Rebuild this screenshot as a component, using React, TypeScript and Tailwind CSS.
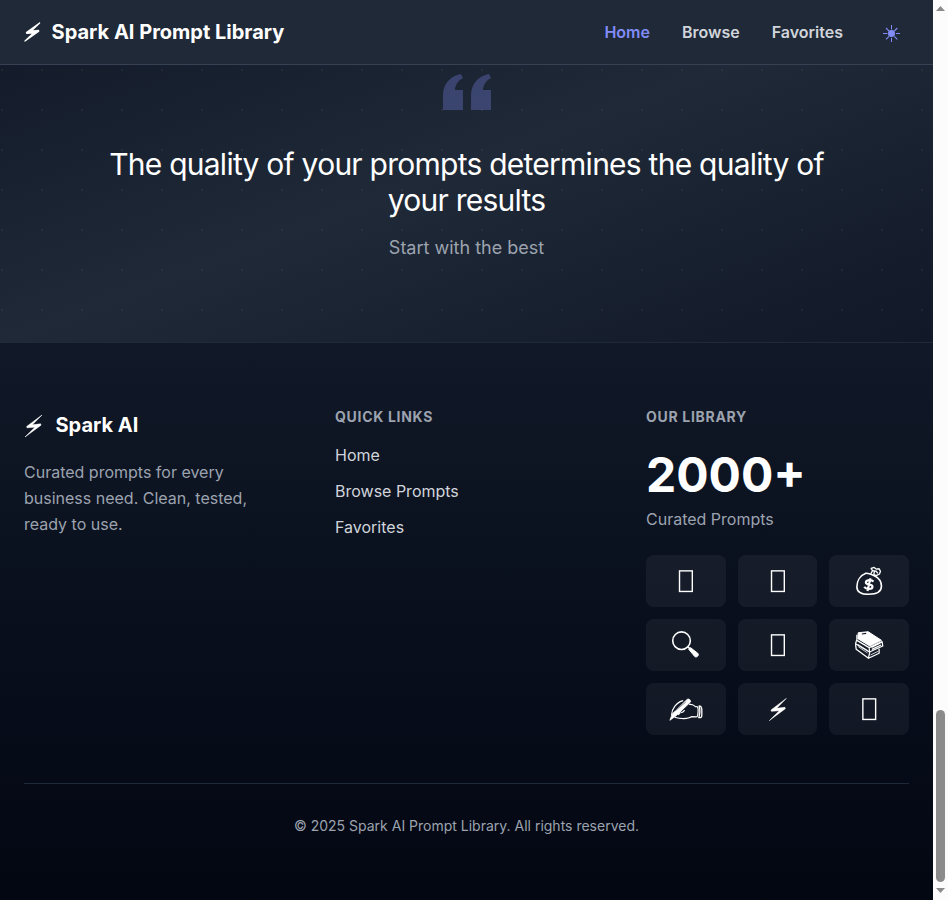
import type { ReactNode } from "react";

const quote =
  "M14.017 21v-7.391c0-5.704 3.731-9.57 8.983-10.609l.995 2.151c-2.432.917-3.995 3.638-3.995 5.849h4v10h-9.983zm-14.017 0v-7.391c0-5.704 3.748-9.57 9-10.609l.996 2.151c-2.433.917-3.996 3.638-3.996 5.849h3.983v10h-9.983z";

const bolt = "M51 0L5 35L6 39L30 37L0 67L48 31L47 27L22 30Z";

function Bolt({ className, stroke = 0 }: { className: string; stroke?: number }) {
  return (
    <svg className={className} viewBox="0 0 51 67" preserveAspectRatio="none" fill="currentColor" stroke="currentColor" strokeWidth={stroke} strokeLinejoin="round">
      <path d={bolt} />
    </svg>
  );
}

function Header() {
  return (
    <header className="relative z-10 flex h-[65px] items-center justify-between border-b border-gray-700 bg-[#1f2937] px-6">
      <a className="flex items-center gap-3 text-xl font-bold text-white">
        <Bolt className="ml-px h-[18px] w-[14.6px] overflow-visible" stroke={4.5} />
        <span>Spark AI Prompt Library</span>
      </a>
      <nav className="flex items-center gap-8 font-semibold text-[#d1d5db]">
        <a className="text-[#818cf8]">Home</a>
        <a>Browse</a>
        <a>Favorites</a>
        <button className="flex w-[34px] justify-center text-[#818cf8]" aria-label="Theme">
          <svg className="mt-[2px] mr-px size-[17px]" viewBox="0 0 51 51" fill="currentColor" stroke="currentColor" strokeWidth="3">
            <circle cx="25.5" cy="25.5" r="9.5" />
            <path d="M25.5 0v13M25.5 39v12M0 25.5h13M39 25.5h12" />
            <path d="M9 9l9 9M34 34l9 9M9 43l9-9M34 18l9-9" strokeWidth="3.2" />
          </svg>
        </button>
      </nav>
    </header>
  );
}

function Quote() {
  return (
    <section className="-mt-[77px] h-[354px] bg-linear-to-br from-[#111827] via-[#1f2937] to-[#111827]">
      <div className="h-full bg-[radial-gradient(circle_at_2px_2px,rgba(255,255,255,0.05)_1px,transparent_0)] bg-size-[40px_40px] pt-20 text-center">
        <svg className="mx-auto mb-[30px] size-12 text-[#818cf8] opacity-30" viewBox="0 0 24 24" fill="currentColor">
          <path d={quote} />
        </svg>
        <h2 className="mx-auto mb-4 max-w-3xl text-3xl leading-9 tracking-tight text-white">
          The quality of your prompts determines the quality of your results
        </h2>
        <p className="text-lg leading-7 text-[#9ca3af]">Start with the best</p>
      </div>
    </section>
  );
}

function Tile({ viewBox, children }: { viewBox: string; children: ReactNode }) {
  return (
    <div className="h-[52px] rounded-lg bg-white/5">
      <svg className="size-full" viewBox={viewBox} fill="none" stroke="#fff" strokeWidth="4.8" strokeLinejoin="round">
        {children}
      </svg>
    </div>
  );
}

function Box({ x = 99 }: { x?: number }) {
  return (
    <Tile viewBox="0 0 240 156">
      <rect x={x + 2} y="47.5" width="38.5" height="62" strokeWidth="4.2" strokeLinejoin="miter" />
    </Tile>
  );
}

function Tiles() {
  return (
    <div className="grid grid-cols-3 gap-3">
      <Box />
      <Box />
      <Tile viewBox="495 -15 240 156">
        <path d="M606 40C588 47 579 64 579 80C579 96 590 103 615 103C641 103 653 95 653 79C653 65 645 54 633 48C624 43 614 39 606 40Z" />
        <path d="M621 41L626 32L622 25L631 22L637 27L646 26L650 34L647 42L637 47L629 43M627 32L637 33L642 40M632 34L630 43" strokeWidth="4" />
        <path d="M629 65C624 58 606 59 606 68C607 77 626 70 626 80C626 89 607 89 601 81M620 55L611 93" strokeWidth="6.5" />
      </Tile>
      <Tile viewBox="-54 177 240 156">
        <circle cx="53" cy="242" r="26.5" />
        <path d="M72 261L79 267" strokeWidth="5" />
        <path d="M75 268L80 263L102 280C107 286 99 294 93 290Z" fill="#fff" strokeWidth="3" />
      </Tile>
      <Box />
      <Tile viewBox="495 177 240 156">
        <path d="M583 218L613 215L653 241L618 258L582 236Z" fill="#fff" strokeWidth="3" />
        <path d="M594 222L607 220" stroke="#171b25" strokeWidth="3.5" />
        <path d="M579 224L579 241L616 263L655 245L657 258L617 276L575 251L578 241M575 253L577 268L614 295L646 280L646 266M618 276L614 294M616 263L617 276M623 262L650 249M624 268L652 255" strokeWidth="3.8" />
        <path d="M582 253L612 272M583 260L611 279M585 231L615 251M620 285L643 274" strokeWidth="2.4" />
      </Tile>
      <Tile viewBox="-54 369 240 156">
        <path d="M18 481L25 462L69 419C74 414 82 420 80 426L37 467Z" fill="#fff" strokeWidth="2.5" />
        <path d="M33 453L66 426" stroke="#171b25" strokeWidth="1.4" />
        <path d="M23 465C24 447 37 427 58 422M76 433C91 431 91 440 98 441M98 440C106 436 103 469 99 471M99 471L83 470C73 478 49 477 32 472M55 447C47 454 48 457 54 457C61 457 58 450 63 452M42 464L49 459" strokeWidth="3.6" />
        <path d="M106 438C114 438 115 443 114 467C114 474 109 473 105 473C109 461 109 448 106 438Z" strokeWidth="4" />
      </Tile>
      <Tile viewBox="221 369 240 156">
        <path d={bolt} transform="translate(315.5 415)" fill="#fff" strokeWidth="1.6" />
      </Tile>
      <Box x={100} />
    </div>
  );
}

function Footer() {
  return (
    <footer className="h-[558px] border-t border-gray-800 bg-linear-to-b from-[#111827] to-[#030712] px-6 pt-16">
      <div className="grid grid-cols-3 gap-12">
        <div>
          <div className="mb-4 flex h-9 items-center text-xl font-bold text-white">
            <Bolt className="mt-px mr-[13.5px] ml-px h-[22px] w-[17px] overflow-visible" stroke={1.6} />
            <span>Spark AI</span>
          </div>
          <p className="max-w-[240px] leading-[26px] text-[#9ca3af]">
            Curated prompts for every business need. Clean, tested, ready to use.
          </p>
        </div>
        <div>
          <h4 className="mb-4 text-sm font-bold tracking-[0.7px] text-[#9ca3af]">QUICK LINKS</h4>
          <ul className="space-y-3 text-[#d1d5db]">
            <li>Home</li>
            <li>Browse Prompts</li>
            <li>Favorites</li>
          </ul>
        </div>
        <div>
          <h4 className="mb-6 text-sm font-bold tracking-[0.7px] text-[#9ca3af]">OUR LIBRARY</h4>
          <div className="mb-2 text-5xl font-bold text-white">2000+</div>
          <div className="mb-6 text-[#9ca3af]">Curated Prompts</div>
          <Tiles />
        </div>
      </div>
      <div className="mt-12 border-t border-gray-800 pt-8 text-center text-sm text-[#9ca3af]">
        © 2025 Spark AI Prompt Library. All rights reserved.
      </div>
    </footer>
  );
}

export default function App() {
  return (
    <div className="flex h-[900px] w-[948px] overflow-hidden font-['Inter',sans-serif]">
      <main className="w-[933px]">
        <Header />
        <Quote />
        <Footer />
      </main>
      <div className="flex w-[15px] flex-col items-center bg-[#fcfcfc]">
        <svg className="mt-[6px] h-[5px] w-[9px]" viewBox="0 0 9 5" fill="#8b8b8b"><path d="M4.5 0L9 5H0z" /></svg>
        <div className="mt-[699px] h-[172px] w-[9px] rounded-full bg-[#8b8b8b]" />
        <svg className="mt-[6px] h-[5px] w-[9px]" viewBox="0 0 9 5" fill="#8b8b8b"><path d="M0 0h9L4.5 5z" /></svg>
      </div>
    </div>
  );
}
